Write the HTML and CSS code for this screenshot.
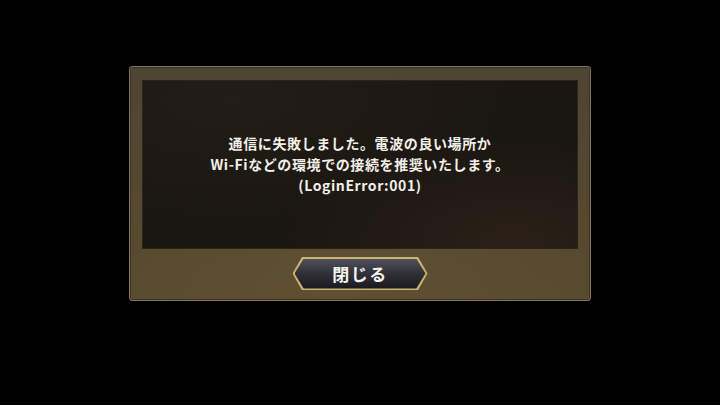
FILE: index.html
```html
<!DOCTYPE html>
<html lang="ja">
<head>
  <meta charset="UTF-8">
  <meta name="viewport" content="width=device-width, initial-scale=1.0">
  <title>通信エラー</title>
  <link rel="stylesheet" href="styles.css">
</head>
<body>
  <div class="dialog">
    <div class="message-panel">
      <p class="message">通信に失敗しました。電波の良い場所か<br>Wi-Fiなどの環境での接続を推奨いたします。<br>(LoginError:001)</p>
    </div>
    <div class="actions">
      <button class="close-btn" type="button">
        <span class="close-btn-face">閉じる</span>
      </button>
    </div>
  </div>
</body>
</html>
```

FILE: styles.css
```css
/* Reset */
body {
  margin: 0;
  background: #000;
  font-family: "Noto Sans CJK JP", "Noto Sans", sans-serif;
}

/* Outer frame */
.dialog {
  box-sizing: border-box;
  width: 462px;
  height: 235px;
  margin: 66px auto 0;
  padding: 14px 13px 0;
  border: 1px solid #85775a;
  border-radius: 3px;
  background: radial-gradient(ellipse at 45% 100%, #5f5032 0%, rgba(95, 80, 50, 0) 70%),
    linear-gradient(180deg, #4f4535 0%, #54482f 60%, #594b2e 100%);
  box-shadow: inset 0 0 0 1px #3a3223;
  display: flex;
  flex-direction: column;
}

/* Dark message area */
.message-panel {
  height: 167px;
  display: flex;
  align-items: center;
  justify-content: center;
  background: radial-gradient(ellipse at 85% 95%, #2a2017 0%, rgba(42, 32, 23, 0) 45%),
    radial-gradient(ellipse at 20% 10%, #221d16 0%, rgba(34, 29, 22, 0) 60%),
    #1a1611;
  box-shadow: 0 0 0 1px #2a2419;
}

.message {
  margin: 0;
  color: #f2efe8;
  font-size: 14px;
  font-weight: 700;
  line-height: 21px;
  text-align: center;
  letter-spacing: 0.6px;
}

/* Button row */
.actions {
  display: flex;
  justify-content: center;
  padding-top: 9px;
}

.close-btn {
  width: 135px;
  height: 33px;
  padding: 0;
  border: 0;
  background: #c9b574;
  clip-path: polygon(7% 0, 93% 0, 100% 50%, 93% 100%, 7% 100%, 0 50%);
  display: flex;
  align-items: stretch;
  justify-content: stretch;
  cursor: pointer;
}

.close-btn-face {
  flex: 1;
  margin: 1.5px 2px;
  display: flex;
  align-items: center;
  justify-content: center;
  background: linear-gradient(180deg, #50515c 0%, #32323a 45%, #19191e 100%);
  clip-path: polygon(7% 0, 93% 0, 100% 50%, 93% 100%, 7% 100%, 0 50%);
  color: #f4f2ee;
  font-family: "Noto Sans CJK JP", sans-serif;
  font-size: 17px;
  font-weight: 700;
  letter-spacing: 1.5px;
}
```
